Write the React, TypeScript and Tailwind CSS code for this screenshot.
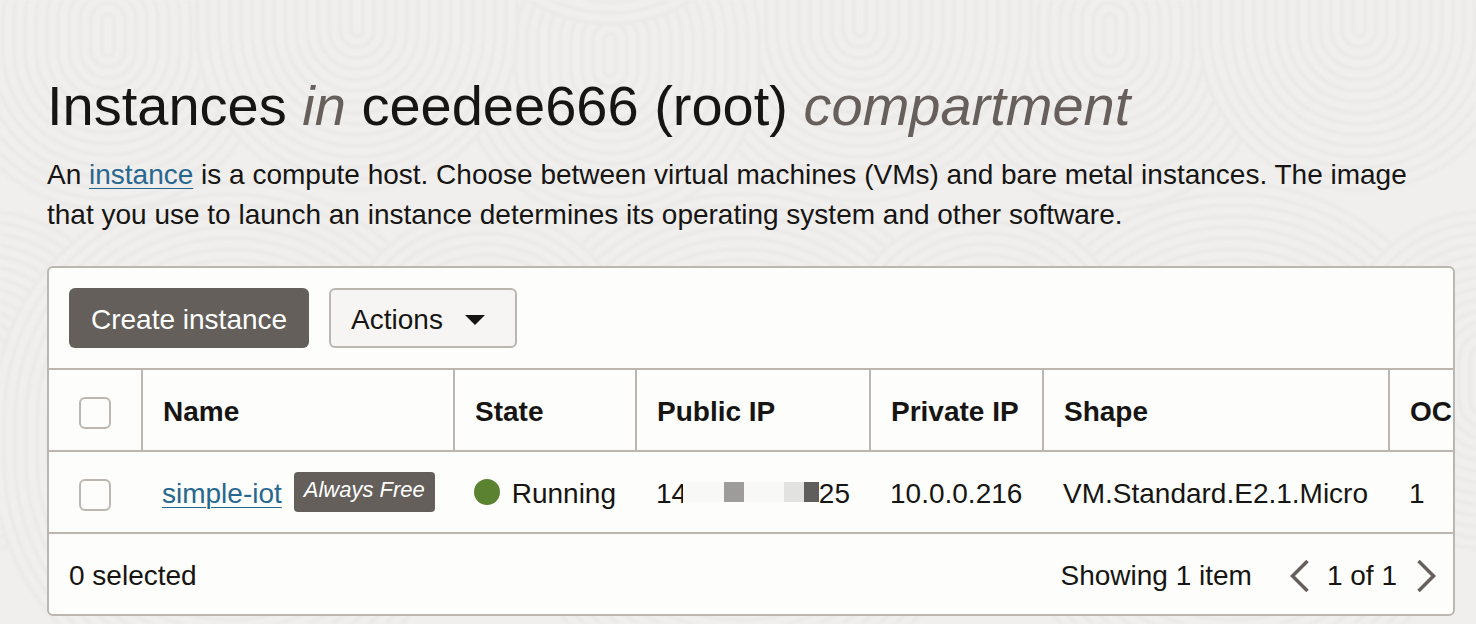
import React from "react";

type Ring = {
  cx: number;
  top: number;
  bottom: number;
  rings: number;
};

// Capsule-shaped contour groups, painted back to front; each one covers the lines behind it.
const RINGS: Ring[] = [
  { cx: 230, top: 420, bottom: 460, rings: 22 },
  { cx: 740, top: 420, bottom: 460, rings: 22 },
  { cx: 485, top: 360, bottom: 400, rings: 14 },
  { cx: 985, top: 360, bottom: 400, rings: 14 },
  { cx: 860, top: -60, bottom: 30, rings: 16 },
  { cx: 610, top: 40, bottom: 70, rings: 14 },
  { cx: 108, top: 20, bottom: 50, rings: 15 },
  { cx: 357, top: -40, bottom: 30, rings: 15 },
  { cx: 610, top: -190, bottom: -125, rings: 14 },
];

const STEP = 11;

function Contours({ shift }: { shift: number }) {
  return (
    <g transform={`translate(${shift} 0)`}>
      {RINGS.map((ring) =>
        Array.from({ length: ring.rings }, (_, i) => {
          const r = STEP * (ring.rings - i) - 5;
          return (
            <rect
              key={`${ring.cx}-${ring.top}-${i}`}
              x={ring.cx - r}
              y={ring.top - r}
              width={r * 2}
              height={ring.bottom - ring.top + r * 2}
              rx={r}
              fill="#f0efed"
              stroke="#ebeae8"
              strokeWidth={4}
            />
          );
        }),
      )}
    </g>
  );
}

function Backdrop() {
  return (
    <svg
      aria-hidden="true"
      className="absolute inset-0 h-full w-full blur-[1px]"
      viewBox="0 0 1476 624"
      preserveAspectRatio="xMinYMin slice"
    >
      <Contours shift={-1002} />
      <Contours shift={1002} />
      <Contours shift={0} />
    </svg>
  );
}

const linkClass = "text-[#28678f] underline decoration-1 underline-offset-4";
const cellClass = "border-[#bcb6b1] px-5 text-left";
const headClass = "border-[#bcb6b1] px-5 pt-1 text-left";

function Check({ label }: { label: string }) {
  return (
    <input
      type="checkbox"
      aria-label={label}
      className="mx-auto block size-8 appearance-none rounded-md border-2 border-[#bcb6b1] bg-[#fdfdfb] checked:bg-[#645f5b]"
    />
  );
}

export default function App() {
  return (
    <main className="relative min-h-screen overflow-hidden bg-[#f0efed] font-['Liberation_Sans',Arial,sans-serif] text-[28px] text-[#161513]">
      <Backdrop />
      <div className="relative pt-[74px] pr-[21px] pb-2 pl-[47px]">
        <h1 className="text-[56px] leading-[64px]">
          Instances <em className="text-[#665f5b]">in</em> ceedee666 (root){" "}
          <em className="text-[#665f5b]">compartment</em>
        </h1>
        <p className="mt-[17px] leading-10">
          An{" "}
          <a href="#instance" className={linkClass}>
            instance
          </a>{" "}
          is a compute host. Choose between virtual machines (VMs) and bare metal instances. The image that you use to
          launch an instance determines its operating system and other software.
        </p>

        <section className="mt-[31px] overflow-hidden rounded-md border-2 border-[#bcb6b1] bg-[#fdfdfb]">
          <div className="flex gap-5 p-5">
            <button type="button" className="h-[60px] rounded-md bg-[#645f5b] px-[22px] pt-1 text-white">
              Create instance
            </button>
            <button
              type="button"
              className="flex h-[60px] items-center gap-[22px] rounded-md border-2 border-[#bcb6b1] bg-[#f7f5f4] pt-1 pr-[30px] pl-5"
            >
              Actions
              <svg width="20" height="10" viewBox="0 0 20 10" aria-hidden="true">
                <path d="M0 0H20L10 10Z" fill="#161513" />
              </svg>
            </button>
          </div>

          <div className="overflow-hidden border-y-2 border-[#bcb6b1]">
            <table className="w-[1520px] table-fixed border-collapse whitespace-nowrap">
              <colgroup>
                <col className="w-[93px]" />
                <col className="w-[312px]" />
                <col className="w-[182px]" />
                <col className="w-[234px]" />
                <col className="w-[173px]" />
                <col className="w-[346px]" />
                <col />
              </colgroup>
              <thead>
                <tr className="h-[81px] border-b-2 border-[#bcb6b1]">
                  <th className="border-r-2 border-[#bcb6b1] pt-1.5">
                    <Check label="Select all instances" />
                  </th>
                  <th className={`${headClass} border-r-2`}>Name</th>
                  <th className={`${headClass} border-r-2`}>State</th>
                  <th className={`${headClass} border-r-2`}>Public IP</th>
                  <th className={`${headClass} border-r-2`}>Private IP</th>
                  <th className={`${headClass} border-r-2`}>Shape</th>
                  <th className={headClass}>OCPU</th>
                </tr>
              </thead>
              <tbody>
                <tr className="h-[81px]">
                  <td className="pt-1.5 pr-0.5">
                    <Check label="Select simple-iot" />
                  </td>
                  <td className={cellClass}>
                    <div className="flex items-center gap-3">
                      <a href="#simple-iot" className={`${linkClass} pt-1`}>
                        simple-iot
                      </a>
                      <em className="h-10 rounded bg-[#645f5b] px-[10px] text-[22px] leading-9 text-white">
                        Always Free
                      </em>
                    </div>
                  </td>
                  <td className={cellClass}>
                    <div className="flex items-center gap-3">
                      <span className="size-[26px] rounded-full bg-[#5b8230]" />
                      <span className="pt-1">Running</span>
                    </div>
                  </td>
                  <td className={cellClass}>
                    <div className="flex items-center">
                      <span className="w-[27px] overflow-hidden pt-1">14</span>
                      <span className="flex h-5 w-[138px]" aria-hidden="true">
                        <span className="w-[41px] bg-[#f8f8f7]" />
                        <span className="w-5 bg-[#9d9c9a]" />
                        <span className="w-10 bg-[#f8f8f7]" />
                        <span className="w-5 bg-[#e2e2e1]" />
                        <span className="grow bg-[#5f5e5c]" />
                      </span>
                      <span className="pt-1">25</span>
                    </div>
                  </td>
                  <td className={headClass}>10.0.0.216</td>
                  <td className={headClass}>VM.Standard.E2.1.Micro</td>
                  <td className={headClass}>1</td>
                </tr>
              </tbody>
            </table>
          </div>

          <footer className="flex h-20 items-center justify-between pt-1 pr-[17px] pl-5">
            <span>0 selected</span>
            <div className="flex items-center">
              <span>Showing 1 item</span>
              <button type="button" aria-label="Previous page" className="mr-[18px] ml-[38px]">
                <svg width="19" height="32" viewBox="0 0 19 32" aria-hidden="true">
                  <path d="M17.5 1L2.5 16L17.5 31" fill="none" stroke="#665f5b" strokeWidth="3.5" />
                </svg>
              </button>
              <span>1 of 1</span>
              <button type="button" aria-label="Next page" className="ml-5">
                <svg width="19" height="32" viewBox="0 0 19 32" aria-hidden="true">
                  <path d="M1.5 1L16.5 16L1.5 31" fill="none" stroke="#665f5b" strokeWidth="3.5" />
                </svg>
              </button>
            </div>
          </footer>
        </section>
      </div>
    </main>
  );
}
